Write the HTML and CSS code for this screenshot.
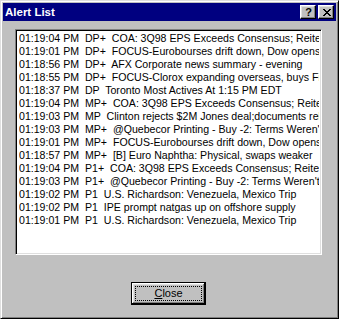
FILE: index.html
```html
<!DOCTYPE html>
<html>
<head>
<meta charset="utf-8">
<link rel="stylesheet" href="styles.css">
</head>
<body>
<div class="window">
  <div class="titlebar">
    <span class="title">Alert List</span>
    <span class="tbtns">
      <span class="tbtn help">?</span>
      <span class="tbtn close">
        <svg width="8" height="7" viewBox="0 0 8 7" shape-rendering="crispEdges">
          <rect x="0" y="0" width="2" height="1"/><rect x="6" y="0" width="2" height="1"/>
          <rect x="1" y="1" width="2" height="1"/><rect x="5" y="1" width="2" height="1"/>
          <rect x="2" y="2" width="4" height="1"/>
          <rect x="3" y="3" width="2" height="1"/>
          <rect x="2" y="4" width="4" height="1"/>
          <rect x="1" y="5" width="2" height="1"/><rect x="5" y="5" width="2" height="1"/>
          <rect x="0" y="6" width="2" height="1"/><rect x="6" y="6" width="2" height="1"/>
        </svg>
      </span>
    </span>
  </div>
  <div class="list">
    <div class="row">01:19:04 PM  DP+  COA: 3Q98 EPS Exceeds Consensus; Reiterates Rating</div>
    <div class="row">01:19:01 PM  DP+  FOCUS-Eurobourses drift down, Dow opens lower</div>
    <div class="row">01:18:56 PM  DP+  AFX Corporate news summary - evening</div>
    <div class="row">01:18:55 PM  DP+  FOCUS-Clorox expanding overseas, buys First Brands</div>
    <div class="row">01:18:37 PM  DP  Toronto Most Actives At 1:15 PM EDT</div>
    <div class="row">01:19:04 PM  MP+  COA: 3Q98 EPS Exceeds Consensus; Reiterates Rating</div>
    <div class="row">01:19:03 PM  MP  Clinton rejects $2M Jones deal;documents released</div>
    <div class="row">01:19:03 PM  MP+  @Quebecor Printing - Buy -2: Terms Weren't Disclosed</div>
    <div class="row">01:19:01 PM  MP+  FOCUS-Eurobourses drift down, Dow opens lower</div>
    <div class="row">01:18:57 PM  MP+  [B] Euro Naphtha: Physical, swaps weaker</div>
    <div class="row">01:19:04 PM  P1+  COA: 3Q98 EPS Exceeds Consensus; Reiterates Rating</div>
    <div class="row">01:19:03 PM  P1+  @Quebecor Printing - Buy -2: Terms Weren't Disclosed</div>
    <div class="row">01:19:02 PM  P1  U.S. Richardson: Venezuela, Mexico Trip</div>
    <div class="row">01:19:02 PM  P1  IPE prompt natgas up on offshore supply</div>
    <div class="row">01:19:01 PM  P1  U.S. Richardson: Venezuela, Mexico Trip</div>
  </div>
  <div class="actions">
    <button class="btn"><span class="focus"><u>C</u>lose</span></button>
  </div>
</div>
</body>
</html>
```

FILE: styles.css
```css
html, body {
  margin: 0;
  padding: 0;
  background: #c0c0c0;
}
.window {
  box-sizing: border-box;
  width: 339px;
  height: 319px;
  background: #c0c0c0;
  border: 1px solid;
  border-color: #dfdfdf #000 #000 #dfdfdf;
  box-shadow: inset 1px 1px #fff, inset -1px -1px #808080;
  padding: 2px;
  font-family: "Liberation Sans", Arial, sans-serif;
  font-size: 11px;
  color: #000;
}
.titlebar {
  height: 18px;
  background: #000080;
  display: flex;
  align-items: center;
  justify-content: space-between;
  padding: 0 2px 0 2px;
}
.title {
  color: #fff;
  font-weight: bold;
  font-size: 11.5px;
  line-height: 18px;
}
.tbtns {
  display: flex;
  gap: 2px;
}
.tbtn {
  box-sizing: border-box;
  width: 16px;
  height: 14px;
  background: #c0c0c0;
  border: 1px solid;
  border-color: #fff #000 #000 #fff;
  box-shadow: inset -1px -1px #808080, inset 1px 1px #dfdfdf;
  display: flex;
  align-items: center;
  justify-content: center;
}
.help {
  font-weight: bold;
  font-size: 11px;
  line-height: 12px;
  padding-left: 1px;
}
.close svg {
  display: block;
  fill: #000;
  margin-left: 1px;
}
.list {
  box-sizing: border-box;
  width: 307px;
  height: 226px;
  margin: 8px 0 0 12px;
  background: #fff;
  border: 1px solid;
  border-color: #808080 #fff #fff #808080;
  box-shadow: inset 1px 1px #000, inset -1px -1px #dfdfdf;
  padding: 2px 2px 0 3px;
  overflow: hidden;
  font-size: 10.6px;
}
.row {
  white-space: pre;
  line-height: 13px;
  height: 13px;
  overflow: hidden;
}
.actions {
  display: flex;
  padding-left: 128px;
  margin-top: 27px;
}
.btn {
  box-sizing: border-box;
  width: 75px;
  height: 23px;
  background: #c0c0c0;
  border: 1px solid #000;
  box-shadow: inset -1px -1px #000, inset 1px 1px #fff, inset -2px -2px #808080, inset 2px 2px #dfdfdf;
  padding: 3px;
  margin: 0;
  font-family: "Liberation Sans", Arial, sans-serif;
  font-size: 11px;
  color: #000;
  display: flex;
}
.focus {
  flex: 1;
  border: 1px dotted #000;
  display: flex;
  align-items: center;
  justify-content: center;
  line-height: 13px;
}
.focus u {
  text-decoration: underline;
  text-underline-offset: 1px;
}
```
